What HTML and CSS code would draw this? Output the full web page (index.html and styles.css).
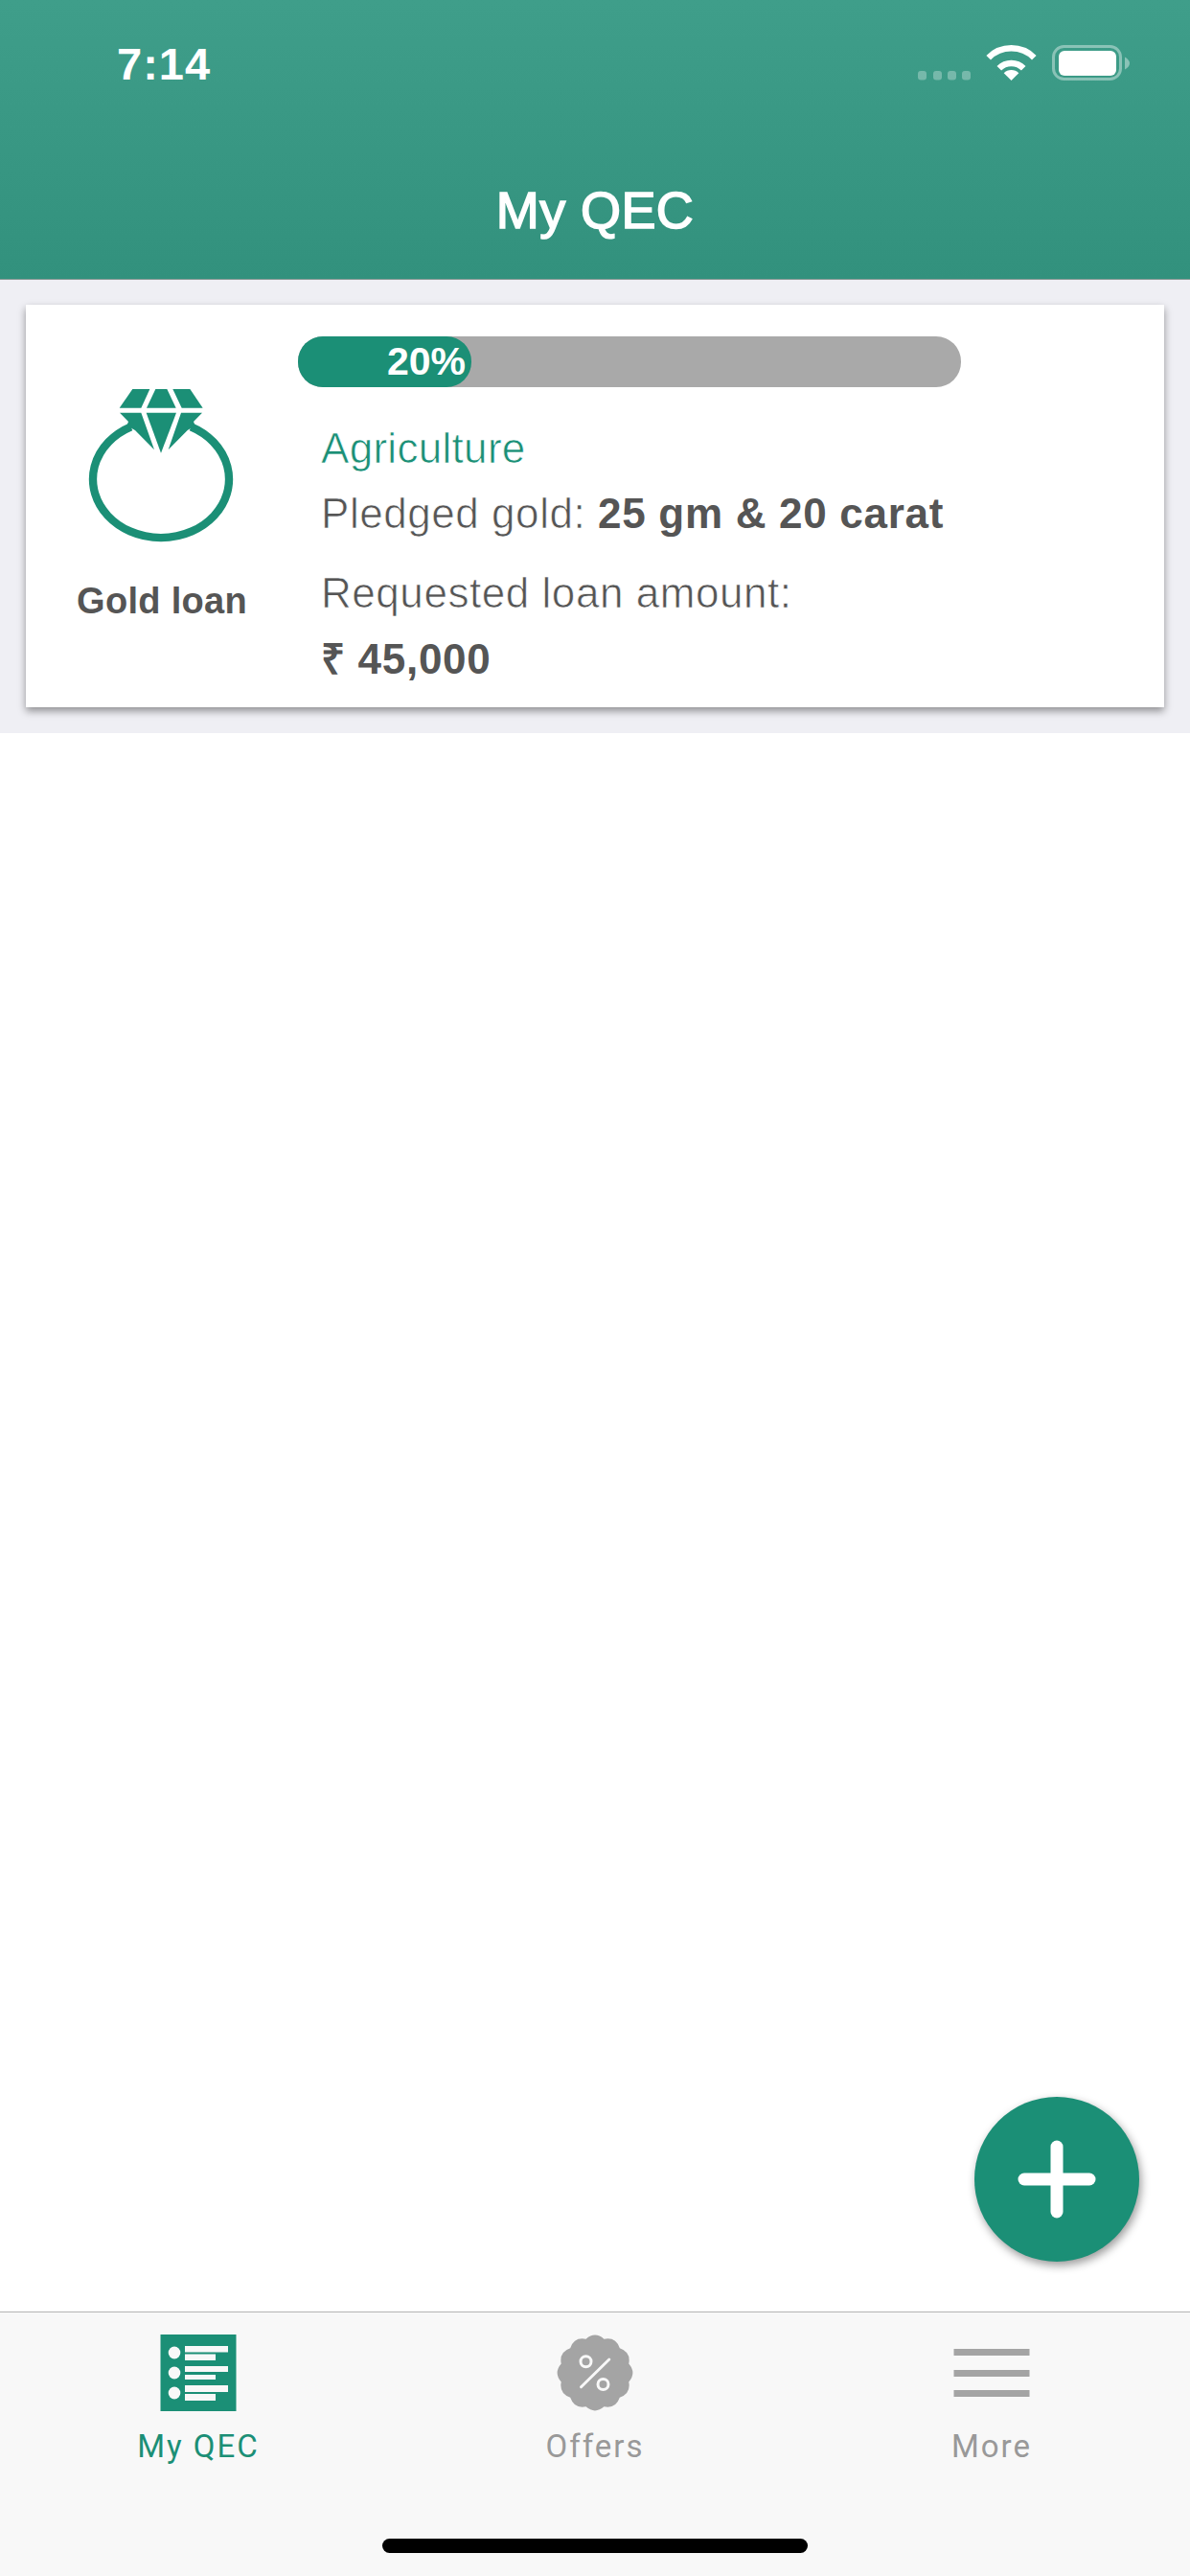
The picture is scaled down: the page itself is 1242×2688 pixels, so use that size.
FILE: index.html
```html
<!DOCTYPE html>
<html lang="en">
<head>
<meta charset="utf-8">
<title>My QEC</title>
<link rel="stylesheet" href="styles.css">
</head>
<body>
<div class="app">
  <header class="header">
    <div class="status">
      <span class="time">7:14</span>
      <svg class="status-icons" width="221" height="37" viewBox="0 0 221 37">
        <g fill="#fff" fill-opacity=".3">
          <rect x="0" y="27" width="9" height="9.5" rx="3"/>
          <rect x="16" y="27" width="9" height="9.5" rx="3"/>
          <rect x="31" y="27" width="9" height="9.5" rx="3"/>
          <rect x="46" y="27" width="9" height="9.5" rx="3"/>
        </g>
        <path d="M73.7 13.2A33.7 33.7 0 0 1 121.3 13.2" fill="none" stroke="#fff" stroke-width="6.5"/>
        <path d="M84.8 24.3A18 18 0 0 1 110.2 24.3" fill="none" stroke="#fff" stroke-width="6.5"/>
        <path d="M97.5 37L89.7 29.2A11 11 0 0 1 105.3 29.2Z" fill="#fff"/>
        <rect x="141.5" y="1.5" width="70" height="34" rx="11" fill="none" stroke="#fff" stroke-opacity=".4" stroke-width="3"/>
        <rect x="147" y="6" width="60" height="26" rx="6" fill="#fff"/>
        <path d="M216 12.5q5 3 5 6.5t-5 6.5z" fill="#fff" fill-opacity=".4"/>
      </svg>
    </div>
    <h1 class="title">My QEC</h1>
  </header>

  <section class="list">
    <article class="card">
      <div class="card-left">
        <svg class="ring" width="200" height="190" viewBox="0 0 600 570">
          <g fill="#1b8f76">
            <path d="M208 48H262L235 107H167Z"/>
            <path d="M280 48H316L344 107H252Z"/>
            <path d="M334 48H388L428 107H362Z"/>
            <path d="M251 122H345L297 248Z"/>
            <path d="M168 122H235L276 238L216 177L190 162L195 150Z"/>
            <path d="M426 122H360L320 238L380 177L404 162L399 150Z"/>
          </g>
          <path d="M203 166A213 183 0 1 0 391 166" fill="none" stroke="#1b8f76" stroke-width="25"/>
        </svg>
        <div class="type">Gold loan</div>
      </div>
      <div class="card-right">
        <div class="progress">
          <div class="progress-fill">20%</div>
        </div>
        <div class="details">
          <div class="line light green">Agriculture</div>
          <div class="line light wide">Pledged gold: <b class="strong">25 gm &amp; 20 carat</b></div>
          <div class="line light wide gap">Requested loan amount:</div>
          <div class="line strong">₹ 45,000</div>
        </div>
      </div>
    </article>
  </section>

  <main class="main">
    <button class="fab" aria-label="Add">
      <svg width="82" height="82" viewBox="0 0 82 82">
        <rect x="0.5" y="34.5" width="81" height="13" rx="6.5" fill="#fff"/>
        <rect x="34.5" y="0.5" width="13" height="81" rx="6.5" fill="#fff"/>
      </svg>
    </button>
  </main>

  <nav class="tabbar">
    <div class="tabs">
      <div class="tab active">
        <svg class="tab-icon" width="80" height="80" viewBox="0 0 80 80">
          <rect x="0.5" width="79" height="80" fill="#1b8f76"/>
          <g fill="#f8f8f8">
            <ellipse cx="15" cy="19" rx="6.3" ry="6.5"/>
            <ellipse cx="15" cy="40" rx="6.3" ry="6.5"/>
            <ellipse cx="15" cy="61" rx="6.3" ry="6.5"/>
            <rect x="26" y="12" width="45" height="6.5"/>
            <rect x="26" y="20.5" width="32" height="6.5"/>
            <rect x="26" y="33" width="45" height="6"/>
            <rect x="26" y="42" width="32" height="5"/>
            <rect x="26" y="53" width="45" height="7"/>
            <rect x="26" y="62" width="32" height="7"/>
          </g>
        </svg>
        <span class="tab-label">My QEC</span>
      </div>
      <div class="tab">
        <svg class="tab-icon" width="80" height="80" viewBox="0 0 80 80">
          <path fill="#a4a4a4" d="M30.55 4.74Q40 -3.5 49.45 4.74Q61.75 2.33 65.8 14.2Q77.67 18.25 75.26 30.55Q83.5 40 75.26 49.45Q77.67 61.75 65.8 65.8Q61.75 77.67 49.45 75.26Q40 83.5 30.55 75.26Q18.25 77.67 14.2 65.8Q2.33 61.75 4.74 49.45Q-3.5 40 4.74 30.55Q2.33 18.25 14.2 14.2Q18.25 2.33 30.55 4.74Z"/>
          <g fill="none" stroke="#f8f8f8" stroke-width="3">
            <circle cx="30.5" cy="28.3" r="5.5"/>
            <circle cx="48.5" cy="52" r="5.5"/>
            <path d="M25.5 54.7L54.8 26" stroke-linecap="round"/>
          </g>
        </svg>
        <span class="tab-label">Offers</span>
      </div>
      <div class="tab">
        <svg class="tab-icon" width="80" height="80" viewBox="0 0 80 80">
          <g fill="#a4a4a4">
            <rect x="0.5" y="15" width="79" height="7"/>
            <rect x="0.5" y="37" width="79" height="7"/>
            <rect x="0.5" y="58" width="79" height="7"/>
          </g>
        </svg>
        <span class="tab-label">More</span>
      </div>
    </div>
    <div class="home-indicator"></div>
  </nav>
</div>
</body>
</html>
```

FILE: styles.css
```css
* { box-sizing: border-box; }
html, body { margin: 0; padding: 0; background: #fff; }
body { font-family: "Liberation Sans", Arial, sans-serif; }

.app {
  width: 1242px;
  height: 2688px;
  display: flex;
  flex-direction: column;
  overflow: hidden;
}

/* Header */
.header {
  height: 292px;
  flex: none;
  background: linear-gradient(180deg, #3f9e8a 0%, #32917d 100%);
  border-bottom: 1px solid #8a9a96;
  color: #fff;
}
.status {
  height: 187px;
  padding: 39px 63px 0 122px;
  display: flex;
  justify-content: space-between;
  align-items: flex-start;
}
.time {
  font-size: 47px;
  line-height: 56px;
  font-weight: 700;
  letter-spacing: 1px;
}
.status-icons { margin-top: 8px; display: block; }
.title {
  margin: 0;
  font-size: 54px;
  line-height: 64px;
  font-weight: 400;
  text-align: center;
  letter-spacing: .4px;
  -webkit-text-stroke: 1.6px #fff;
}

/* List */
.list {
  flex: none;
  height: 473px;
  padding: 26px 27px 27px;
  background: #efeff4;
}
.card {
  height: 420px;
  background: #fff;
  display: flex;
  box-shadow: 0 4px 8px rgba(0, 0, 0, .4);
}
.card-left {
  width: 284px;
  flex: none;
  display: flex;
  flex-direction: column;
  align-items: center;
  padding-top: 72px;
}
.ring { display: block; }
.type {
  margin-top: 22px;
  font-size: 38px;
  line-height: 50px;
  font-weight: 700;
  letter-spacing: .3px;
  color: #555;
}
.card-right { flex: 1; padding-top: 33px; }
.progress {
  width: 692px;
  height: 53px;
  border-radius: 26px;
  background: #a9a9a9;
}
.progress-fill {
  width: 181px;
  height: 53px;
  border-radius: 26px;
  background: #1b8f76;
  color: #fff;
  font-size: 41px;
  font-weight: 700;
  line-height: 53px;
  text-align: right;
  padding-right: 6px;
}
.details { margin-top: 30px; padding-left: 24px; }
.line {
  font-size: 44px;
  line-height: 68px;
  color: #555;
  white-space: nowrap;
}
.light {
  letter-spacing: .3px;
  -webkit-text-stroke: .7px #fff;
}
.wide { letter-spacing: .55px; }
.green { color: #1b8f76; }
.gap { margin-top: 15px; }
.line + .strong { margin-top: 1px; }
.strong {
  font-weight: 700;
  letter-spacing: .7px;
  color: #555;
  -webkit-text-stroke: 0;
}

/* Main */
.main {
  flex: 1;
  position: relative;
  background: #fff;
}
.fab {
  position: absolute;
  right: 53px;
  bottom: 52px;
  width: 172px;
  height: 172px;
  padding: 0;
  border: 0;
  border-radius: 50%;
  background: #1b8f76;
  box-shadow: 2px 4px 10px rgba(0, 0, 0, .4);
  display: flex;
  align-items: center;
  justify-content: center;
}
.fab svg { display: block; }

/* Tab bar */
.tabbar {
  flex: none;
  height: 276px;
  background: #f8f8f8;
  border-top: 1px solid #b4b4b4;
  display: flex;
  flex-direction: column;
  align-items: center;
}
.tabs {
  width: 100%;
  display: grid;
  grid-template-columns: repeat(3, 1fr);
  padding-top: 23px;
}
.tab {
  display: flex;
  flex-direction: column;
  align-items: center;
}
.tab-icon { display: block; }
.tab-label {
  margin-top: 17px;
  font-family: Roboto, "Liberation Sans", sans-serif;
  font-size: 33px;
  line-height: 40px;
  letter-spacing: 2px;
  color: #999;
}
.tab.active .tab-label { color: #1b8f76; }
.home-indicator {
  margin-top: auto;
  margin-bottom: 24px;
  width: 444px;
  height: 15px;
  border-radius: 8px;
  background: #000;
}
```
